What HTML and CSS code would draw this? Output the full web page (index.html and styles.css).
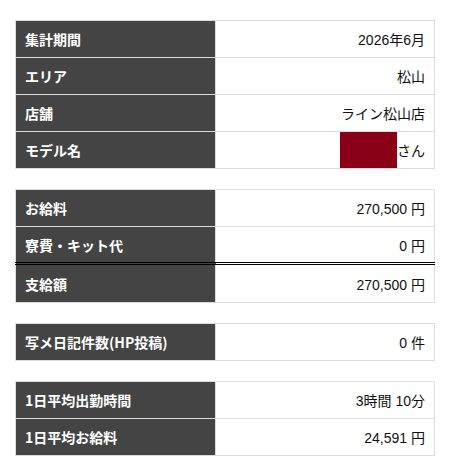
FILE: index.html
```html
<!DOCTYPE html>
<html lang="ja">
<head>
<meta charset="utf-8">
<link rel="stylesheet" href="styles.css">
</head>
<body>
<div class="page">
  <table class="info">
    <tr><th>集計期間</th><td>2026年6月</td></tr>
    <tr><th>エリア</th><td>松山</td></tr>
    <tr><th>店舗</th><td>ライン松山店</td></tr>
    <tr><th>モデル名</th><td class="model"><div class="model-box"><span class="mask"></span><span>さん</span></div></td></tr>
  </table>
  <table class="info">
    <tr><th>お給料</th><td>270,500 円</td></tr>
    <tr><th>寮費・キット代</th><td>0 円</td></tr>
    <tr class="total"><th>支給額</th><td>270,500 円</td></tr>
  </table>
  <table class="info">
    <tr><th>写メ日記件数(HP投稿)</th><td>0 件</td></tr>
  </table>
  <table class="info">
    <tr><th>1日平均出勤時間</th><td>3時間 10分</td></tr>
    <tr><th>1日平均お給料</th><td>24,591 円</td></tr>
  </table>
</div>
</body>
</html>
```
FILE: styles.css
```css
html, body {
  margin: 0;
  padding: 0;
  background: #fff;
}
.page {
  padding: 20px 15px;
  display: flex;
  flex-direction: column;
  gap: 20px;
}
.info {
  width: 420px;
  border-collapse: collapse;
  table-layout: fixed;
}
.info th,
.info td {
  border: 1px solid #dcdcdc;
  height: 37px;
  padding: 0 9px;
  font-size: 14px;
  box-sizing: border-box;
}
.info th {
  width: 200px;
  background: #444;
  color: #fff;
  text-align: left;
  font-family: "Noto Sans CJK JP", sans-serif;
  font-weight: bold;
}
.info td {
  text-align: right;
  color: #111;
  font-family: "Liberation Sans", "Noto Sans CJK JP", sans-serif;
  font-weight: normal;
}
.info tr.total th,
.info tr.total td {
  border-top: 3px double #000;
  height: 39px;
}
.info td.model {
  padding: 0 9px 0 0;
}
.model-box {
  display: flex;
  justify-content: flex-end;
  align-items: center;
  height: 36px;
}
.model-box .mask {
  align-self: stretch;
  width: 57px;
  background: #8a0016;
}
```
